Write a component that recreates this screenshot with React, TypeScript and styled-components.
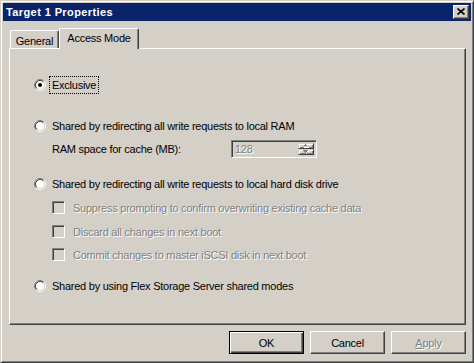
import React from "react";
import styled, { createGlobalStyle } from "styled-components";

const FACE = "#d4d0c8";
const SHADOW = "#808080";
const DARK = "#404040";
const LIGHT = "#ffffff";

const GlobalStyle = createGlobalStyle`
  html, body {
    margin: 0;
    padding: 0;
    background: ${FACE};
  }
  body {
    font-family: "Liberation Sans", Arial, sans-serif;
    font-size: 11px;
    letter-spacing: -0.25px;
    color: #000;
  }
  * {
    box-sizing: border-box;
  }
`;

const Window = styled.div`
  width: 474px;
  height: 363px;
  display: flex;
  flex-direction: column;
  background: ${FACE};
  border: 1px solid;
  border-color: ${FACE} ${DARK} ${DARK} ${FACE};
  box-shadow: inset 1px 1px ${LIGHT}, inset -1px -1px ${SHADOW};
  padding: 2px;
`;

const TitleBar = styled.div`
  height: 18px;
  flex-shrink: 0;
  background: #0a246a;
  display: flex;
  align-items: center;
  justify-content: space-between;
  padding: 0 2px 0 3px;
`;

const Title = styled.span`
  color: #fff;
  font-weight: bold;
  letter-spacing: 0.4px;
`;

const CaptionButton = styled.div`
  width: 16px;
  height: 14px;
  background: ${FACE};
  border: 1px solid;
  border-color: ${LIGHT} ${DARK} ${DARK} ${LIGHT};
  box-shadow: inset -1px -1px ${SHADOW};
  display: flex;
  align-items: center;
  justify-content: center;
  padding: 0 1px 1px 0;
`;

const Body = styled.div`
  flex: 1;
  display: flex;
  flex-direction: column;
  padding: 7px 5px 0 6px;
`;

const TabStrip = styled.div`
  display: flex;
  align-items: flex-end;
  height: 20px;
  padding-left: 1px;
  position: relative;
  z-index: 1;
`;

const Tab = styled.div<{ $active?: boolean; $width: number }>`
  width: ${(p) => p.$width}px;
  height: ${(p) => (p.$active ? 21 : 18)}px;
  margin-bottom: ${(p) => (p.$active ? -1 : 0)}px;
  background: ${FACE};
  border-top: 1px solid ${LIGHT};
  border-left: 1px solid ${LIGHT};
  border-right: 1px solid ${DARK};
  border-radius: 2px 2px 0 0;
  box-shadow: inset -1px 0 ${SHADOW};
  display: flex;
  justify-content: center;
  padding-top: ${(p) => (p.$active ? 3 : 4)}px;
  line-height: 13px;
`;

const Panel = styled.div`
  flex: 1;
  display: flex;
  flex-direction: column;
  border: 1px solid;
  border-color: ${LIGHT} ${DARK} ${DARK} ${LIGHT};
  box-shadow: inset -1px -1px ${SHADOW};
  padding: 27px 0 0 24px;
`;

const Row = styled.div<{ $gap?: number; $indent?: number; $height?: number }>`
  display: flex;
  align-items: center;
  height: ${(p) => p.$height ?? 17}px;
  margin-top: ${(p) => p.$gap ?? 0}px;
  margin-left: ${(p) => p.$indent ?? 0}px;
`;

const RadioLabel = styled.span<{ $focused?: boolean }>`
  margin-left: 3px;
  padding: 0 2px;
  height: 18px;
  line-height: 16px;
  border: 1px dotted ${(p) => (p.$focused ? "#000" : "transparent")};
`;

const CheckBox = styled.span`
  width: 13px;
  height: 13px;
  flex-shrink: 0;
  background: ${FACE};
  border: 1px solid;
  border-color: ${SHADOW} ${LIGHT} ${LIGHT} ${SHADOW};
  box-shadow: inset 1px 1px ${DARK}, inset -1px -1px ${FACE};
`;

const DisabledText = styled.span<{ $offset?: number }>`
  margin-left: ${(p) => p.$offset ?? 0}px;
  color: ${SHADOW};
  text-shadow: 1px 1px ${LIGHT};
`;

const FieldLabel = styled.span`
  width: 179px;
`;

const Spinner = styled.div`
  width: 86px;
  height: 18px;
  display: flex;
  background: ${FACE};
  border: 1px solid;
  border-color: ${SHADOW} ${LIGHT} ${LIGHT} ${SHADOW};
  box-shadow: inset 1px 1px ${DARK}, inset -1px -1px ${FACE};
  padding: 2px 2px 2px 3px;
`;

const SpinValue = styled.span`
  flex: 1;
  line-height: 13px;
  color: ${SHADOW};
  text-shadow: 1px 1px ${LIGHT};
`;

const SpinButtons = styled.div`
  width: 16px;
  display: flex;
  flex-direction: column;
`;

const SpinButton = styled.div`
  flex: 1;
  background: ${FACE};
  border: 1px solid;
  border-color: ${FACE} ${DARK} ${DARK} ${FACE};
  box-shadow: inset 1px 1px ${LIGHT}, inset -1px -1px ${SHADOW};
  display: flex;
  align-items: center;
  justify-content: center;
`;

const Footer = styled.div`
  display: flex;
  justify-content: flex-end;
  gap: 6px;
  padding: 6px 0;
`;

const Button = styled.button<{ $default?: boolean; $disabled?: boolean }>`
  width: 75px;
  height: 23px;
  padding: 0;
  font: inherit;
  letter-spacing: inherit;
  background: ${FACE};
  color: ${(p) => (p.$disabled ? SHADOW : "#000")};
  text-shadow: ${(p) => (p.$disabled ? `1px 1px ${LIGHT}` : "none")};
  border: 1px solid;
  border-color: ${(p) =>
    p.$default ? "#000" : `${LIGHT} ${DARK} ${DARK} ${LIGHT}`};
  box-shadow: ${(p) =>
    p.$default
      ? `inset 1px 1px ${LIGHT}, inset -1px -1px ${DARK}, inset -2px -2px ${SHADOW}`
      : `inset -1px -1px ${SHADOW}`};
`;

const Radio = ({ checked }: { checked?: boolean }) => (
  <svg width="12" height="12" viewBox="0 0 12 12" style={{ flexShrink: 0 }}>
    <circle cx="6" cy="6" r="4.6" fill="#fff" />
    <path d="M2.11 9.89 A5.5 5.5 0 0 1 9.89 2.11" fill="none" stroke={SHADOW} />
    <path d="M9.89 2.11 A5.5 5.5 0 0 1 2.11 9.89" fill="none" stroke={LIGHT} />
    <path d="M2.82 9.18 A4.5 4.5 0 0 1 9.18 2.82" fill="none" stroke={DARK} />
    <path d="M9.18 2.82 A4.5 4.5 0 0 1 2.82 9.18" fill="none" stroke={FACE} />
    {checked && <circle cx="6" cy="6" r="2" fill="#000" />}
  </svg>
);

// tiny disabled spin arrow, grey with a white emboss
const Arrow = ({ up }: { up?: boolean }) => (
  <svg width="6" height="4" viewBox="0 0 6 4" shapeRendering="crispEdges">
    {up ? (
      <>
        <rect x="3" y="1" width="1" height="1" fill={LIGHT} />
        <rect x="1" y="3" width="5" height="1" fill={LIGHT} />
        <rect x="2" y="0" width="1" height="1" fill={SHADOW} />
        <rect x="1" y="1" width="3" height="1" fill={SHADOW} />
      </>
    ) : (
      <>
        <rect x="1" y="1" width="5" height="1" fill={LIGHT} />
        <rect x="3" y="3" width="1" height="1" fill={LIGHT} />
        <rect x="0" y="0" width="5" height="1" fill={SHADOW} />
        <rect x="1" y="1" width="3" height="1" fill={SHADOW} />
        <rect x="2" y="2" width="1" height="1" fill={SHADOW} />
      </>
    )}
  </svg>
);

const CloseGlyph = () => (
  <svg width="8" height="7" viewBox="0 0 8 7">
    <path
      d="M0.5 0.5 L7.5 6.5 M7.5 0.5 L0.5 6.5"
      stroke="#000"
      strokeWidth="1.6"
      fill="none"
    />
  </svg>
);

const CACHE_OPTIONS = [
  { label: "Suppress prompting to confirm overwriting existing cache data", gap: 7 },
  { label: "Discard all changes in next boot", gap: 7 },
  { label: "Commit changes to master iSCSI disk in next boot", gap: 6 },
];

const App = () => (
  <>
    <GlobalStyle />
    <Window>
      <TitleBar>
        <Title>Target 1 Properties</Title>
        <CaptionButton>
          <CloseGlyph />
        </CaptionButton>
      </TitleBar>
      <Body>
        <TabStrip>
          <Tab $width={49}>General</Tab>
          <Tab $width={80} $active>
            Access Mode
          </Tab>
        </TabStrip>
        <Panel>
          <Row>
            <Radio checked />
            <RadioLabel $focused>Exclusive</RadioLabel>
          </Row>

          <Row $gap={24}>
            <Radio />
            <RadioLabel>Shared by redirecting all write requests to local RAM</RadioLabel>
          </Row>
          <Row $gap={6} $indent={18} $height={18}>
            <FieldLabel>RAM space for cache (MB):</FieldLabel>
            <Spinner>
              <SpinValue>128</SpinValue>
              <SpinButtons>
                <SpinButton>
                  <Arrow up />
                </SpinButton>
                <SpinButton>
                  <Arrow />
                </SpinButton>
              </SpinButtons>
            </Spinner>
          </Row>

          <Row $gap={17}>
            <Radio />
            <RadioLabel>
              Shared by redirecting all write requests to local hard disk drive
            </RadioLabel>
          </Row>
          {CACHE_OPTIONS.map(({ label, gap }) => (
            <Row key={label} $gap={gap} $indent={18}>
              <CheckBox />
              <DisabledText $offset={8}>{label}</DisabledText>
            </Row>
          ))}

          <Row $gap={14}>
            <Radio />
            <RadioLabel>Shared by using Flex Storage Server shared modes</RadioLabel>
          </Row>
        </Panel>
        <Footer>
          <Button $default>OK</Button>
          <Button>Cancel</Button>
          <Button $disabled>
            <u>A</u>pply
          </Button>
        </Footer>
      </Body>
    </Window>
  </>
);

export default App;
